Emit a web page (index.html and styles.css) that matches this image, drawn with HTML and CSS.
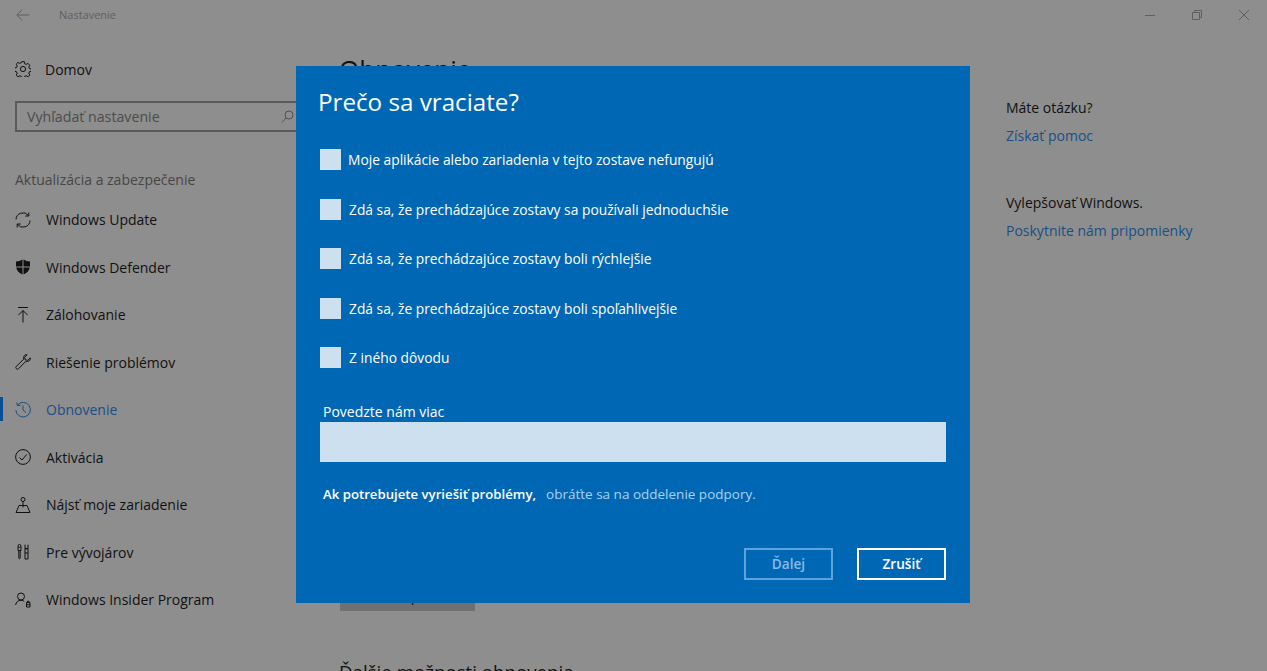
FILE: index.html
```html
<!DOCTYPE html>
<html lang="sk">

<head>
    <title>Nastavenie</title>
    <link rel="stylesheet" href="styles.css">
</head>

<body>
    <div class="titlebar">
        <svg class="back-icon" width="14" height="12" viewBox="0 0 14 12"><path d="M13.5 6H1M6 .8 .8 6 6 11.2" /></svg>
        <span class="title">Nastavenie</span>
        <div class="spacer"></div>
        <div class="window-buttons">
            <svg width="12" height="12" viewBox="0 0 12 12"><path d="M1 6.5h10" /></svg>
            <svg width="12" height="12" viewBox="0 0 12 12"><path d="M1.5 3.5h7v7h-7zM3.5 3.5v-2h7v7h-2" /></svg>
            <svg width="12" height="12" viewBox="0 0 12 12"><path d="M1 1l10 10M11 1 1 11" /></svg>
        </div>
    </div>

    <div class="layout">
        <div class="sidebar">
            <div class="home">
                <svg class="nav-icon" width="16" height="16" viewBox="0 0 16 16"><path d="M6.7 .7h2.6l.4 2 1.5.7 1.8-1 1.8 1.8-1 1.8.6 1.5 2 .4v2.4l-2 .5-.6 1.4 1 1.8-1.8 1.8-1.8-1-1.5.6-.4 2H6.7l-.4-2-1.5-.6-1.8 1-1.8-1.8 1-1.8-.6-1.4-2-.5V6.900l2-.4.6-1.5-1-1.8 1.8-1.8 1.8 1 1.500-.7z" /><circle cx="8" cy="8" r="2.600" /></svg>
                <span>Domov</span>
            </div>
            <div class="search">
                <span>Vyhľadať nastavenie</span>
                <svg width="13" height="13" viewBox="0 0 13 13"><circle cx="8" cy="5" r="4" /><path d="M5.200 8 1 12.300" /></svg>
            </div>
            <div class="section-title">Aktualizácia a zabezpečenie</div>

            <div class="nav-item">
                <svg class="nav-icon" width="16" height="16" viewBox="0 0 16 16"><path d="M1 7.500A7 7 0 0 1 13.500 3.500M15 8.500A7 7 0 0 1 2.500 12.500M13.800 .5v3.500h-3.500M2.200 15.500V12h3.500" /></svg>
                <span>Windows Update</span>
            </div>
            <div class="nav-item">
                <svg class="nav-icon" width="16" height="16" viewBox="0 0 16 16"><path class="solid" d="M7.500 .5v7H1V2.500C3.500 2.500 5.500 1.800 7.500 .5zM8.500 .5c2 1.300 4 2 6.500 2v5H8.500zM1.200 8.500h6.300v7C4.200 14.300 1.800 11.800 1.200 8.500zM8.500 8.500h6.300c-.6 3.300-3 5.800-6.300 7z" /></svg>
                <span>Windows Defender</span>
            </div>
            <div class="nav-item">
                <svg class="nav-icon" width="16" height="16" viewBox="0 0 16 16"><path d="M3 .5h10M8 15.500V3.500M3.500 8 8 3.500 12.500 8" /></svg>
                <span>Zálohovanie</span>
            </div>
            <div class="nav-item">
                <svg class="nav-icon" width="16" height="16" viewBox="0 0 16 16"><path d="M10.500 .8C9 1.300 8.200 3 8.700 5.200L1.300 12.400a1.600 1.600 0 0 0 2.300 2.300L10.800 7.300c2.200.5 3.900-.3 4.400-1.800.2-.6.2-1.100.1-1.600L12.800 6.300 10.200 5.800 9.700 3.200 12.100.7C11.600.6 11.100.6 10.500 .8z" /></svg>
                <span>Riešenie problémov</span>
            </div>
            <div class="nav-item active">
                <svg class="nav-icon" width="16" height="16" viewBox="0 0 16 16"><path d="M2.500 3A7.300 7.300 0 1 1 .8 8M1.800 .5 2.300 3.500 5.500 3.500M8 3.500V8l3 2.500" /></svg>
                <span>Obnovenie</span>
            </div>
            <div class="nav-item">
                <svg class="nav-icon" width="16" height="16" viewBox="0 0 16 16"><circle cx="8" cy="8" r="7.400" /><path d="M4.500 8.500 7 11l4.700-5.500" /></svg>
                <span>Aktivácia</span>
            </div>
            <div class="nav-item">
                <svg class="nav-icon" width="16" height="16" viewBox="0 0 16 16"><circle cx="8" cy="2.500" r="2" /><path d="M8 4.500v6M4 8.500h8L15 15.500H1z" /></svg>
                <span>Nájsť moje zariadenie</span>
            </div>
            <div class="nav-item">
                <svg class="nav-icon" width="16" height="16" viewBox="0 0 16 16"><circle cx="4.500" cy="2" r="1.500" /><path d="M3 3v3.500h3V3M3.800 6.500V14a.7.7 0 0 0 1.400 0V6.500M10 .7v4h3V.7M10 4.700h3V15h-3zM10 9h3" /></svg>
                <span>Pre vývojárov</span>
            </div>
            <div class="nav-item">
                <svg class="nav-icon" width="16" height="16" viewBox="0 0 16 16"><circle cx="6" cy="4.500" r="3.500" /><path d="M.6 13c.5-3 2.500-4.700 5.400-4.700 1.300 0 2.400.3 3.200 1M11.500 10.500h3.500v4.500h-3.500zM11.500 12.700h3.500M12.500 10.500V9.300h1.500v1.200" /></svg>
                <span>Windows Insider Program</span>
            </div>
        </div>

        <div class="content">
            <h1>Obnovenie</h1>
            <div class="content-button"><span>Späť</span></div>
            <h2>Ďalšie možnosti obnovenia</h2>
        </div>

        <div class="help">
            <div class="help-block">
                <div>Máte otázku?</div>
                <a href="#">Získať pomoc</a>
            </div>
            <div class="help-block">
                <div>Vylepšovať Windows.</div>
                <a href="#">Poskytnite nám pripomienky</a>
            </div>
        </div>
    </div>

    <div class="dialog">
        <h3>Prečo sa vraciate?</h3>
        <div class="reasons">
            <div class="reason"><div class="checkbox"></div><span class="first">Moje aplikácie alebo zariadenia v tejto zostave nefungujú</span></div>
            <div class="reason"><div class="checkbox"></div><span>Zdá sa, že prechádzajúce zostavy sa používali jednoduchšie</span></div>
            <div class="reason"><div class="checkbox"></div><span>Zdá sa, že prechádzajúce zostavy boli rýchlejšie</span></div>
            <div class="reason"><div class="checkbox"></div><span>Zdá sa, že prechádzajúce zostavy boli spoľahlivejšie</span></div>
            <div class="reason"><div class="checkbox"></div><span>Z iného dôvodu</span></div>
        </div>
        <div class="field-label">Povedzte nám viac</div>
        <div class="text-field"></div>
        <div class="support">
            <span class="support-strong">Ak potrebujete vyriešiť problémy,</span>
            <a href="#">obráťte sa na oddelenie podpory.</a>
        </div>
        <div class="dialog-buttons">
            <button class="btn btn-disabled">Ďalej</button>
            <button class="btn">Zrušiť</button>
        </div>
    </div>
</body>

</html>
```

FILE: styles.css
```css
body {
    font-family: "Open Sans", "Noto Sans", sans-serif;
    font-size: 14px;
    margin: 0;
    height: 671px;
    overflow: hidden;
    background-color: #8e8e8e;
    color: #111;
}

svg {
    fill: none;
    stroke: currentColor;
    stroke-width: 1;
    flex-shrink: 0;
}

.titlebar {
    display: flex;
    align-items: center;
    height: 29px;
    padding-left: 16px;
    color: #5f5f5f;
}

.back-icon {
    margin-right: 29px;
}

.title {
    font-size: 11px;
}

.spacer {
    flex-grow: 1;
}

.window-buttons {
    display: flex;
    gap: 35px;
    padding-right: 17px;
}

.layout {
    display: flex;
}

.sidebar {
    width: 296px;
    flex-shrink: 0;
    box-sizing: border-box;
    padding-left: 15px;
}

.home {
    display: flex;
    align-items: center;
    height: 30px;
    margin-top: 25px;
    gap: 14px;
}

.search {
    display: flex;
    align-items: center;
    justify-content: space-between;
    box-sizing: border-box;
    height: 31px;
    margin-top: 17px;
    padding: 0 2px 0 10px;
    border: 2px solid #5a5a5a;
    border-right: none;
    color: #4c4c4c;
    font-size: 14.2px;
}

.search svg {
    color: #505050;
}

.section-title {
    color: #474747;
    margin-top: 38px;
    margin-bottom: 6px;
    height: 20px;
    line-height: 20px;
}

.nav-item {
    display: flex;
    align-items: center;
    height: 47.5px;
    gap: 15px;
}

.nav-item.active {
    color: #1a4f86;
    position: relative;
}

.nav-item.active::before {
    content: "";
    position: absolute;
    left: -15px;
    top: 11px;
    width: 3px;
    height: 24px;
    background-color: #0a4f94;
}

.solid {
    fill: currentColor;
    stroke: none;
}

.content {
    width: 666px;
    flex-shrink: 0;
    box-sizing: border-box;
    padding-left: 44px;
}

h1 {
    font-size: 26px;
    font-weight: 400;
    margin: 20px 0 0 -1px;
    line-height: 40px;
}

.content-button {
    display: flex;
    align-items: flex-end;
    box-sizing: border-box;
    width: 135px;
    height: 40px;
    margin-top: 482px;
    padding: 0 0 5px 63px;
    background-color: #707070;
    line-height: 20px;
}

h2 {
    font-size: 18.7px;
    font-weight: 400;
    margin: 47px 0 0 -1px;
    line-height: 28px;
}

.help {
    padding: 69px 0 0 44px;
}

.help-block {
    margin-bottom: 47px;
}

.help-block div,
.help-block a {
    display: block;
    line-height: 20px;
}

.help-block a {
    color: #1a4f86;
    text-decoration: none;
    margin-top: 8px;
}

/* dialog sits over the dimmed settings window */
.dialog {
    position: absolute;
    left: 296px;
    top: 66px;
    width: 674px;
    height: 537px;
    box-sizing: border-box;
    padding: 0 24px 0 24px;
    background-color: #0067b5;
    color: white;
    display: flex;
    flex-direction: column;
}

h3 {
    font-size: 24.2px;
    font-weight: 400;
    margin: 16px 0 0 -2px;
    line-height: 40px;
}

.reasons {
    margin-top: 27px;
}

.reason {
    display: flex;
    align-items: center;
    height: 21px;
    margin-bottom: 28.5px;
    gap: 8px;
    font-size: 13.8px;
}

.checkbox {
    width: 21px;
    height: 21px;
    background-color: #cde0f0;
}

.first {
    margin-left: -1px;
}

.field-label {
    margin: 5px 0 0 3px;
    line-height: 20px;
}

.text-field {
    height: 40px;
    background-color: #cde0f0;
}

.support {
    display: flex;
    gap: 10px;
    margin: 22px 0 0 3px;
    line-height: 20px;
    font-size: 13.5px;
}

.support-strong {
    font-size: 13.2px;
    font-weight: 600;
}

.support a {
    color: #a8d2f2;
    text-decoration: none;
}

.dialog-buttons {
    display: flex;
    justify-content: flex-end;
    gap: 24px;
    margin-top: 44px;
}

.btn {
    width: 89px;
    height: 32px;
    background: transparent;
    border: 2px solid white;
    color: white;
    font-family: inherit;
    font-size: 13.6px;
    font-weight: 600;
    padding: 0;
}

.btn-disabled {
    border-color: #5ea3dc;
    color: #86bbe6;
}
```
